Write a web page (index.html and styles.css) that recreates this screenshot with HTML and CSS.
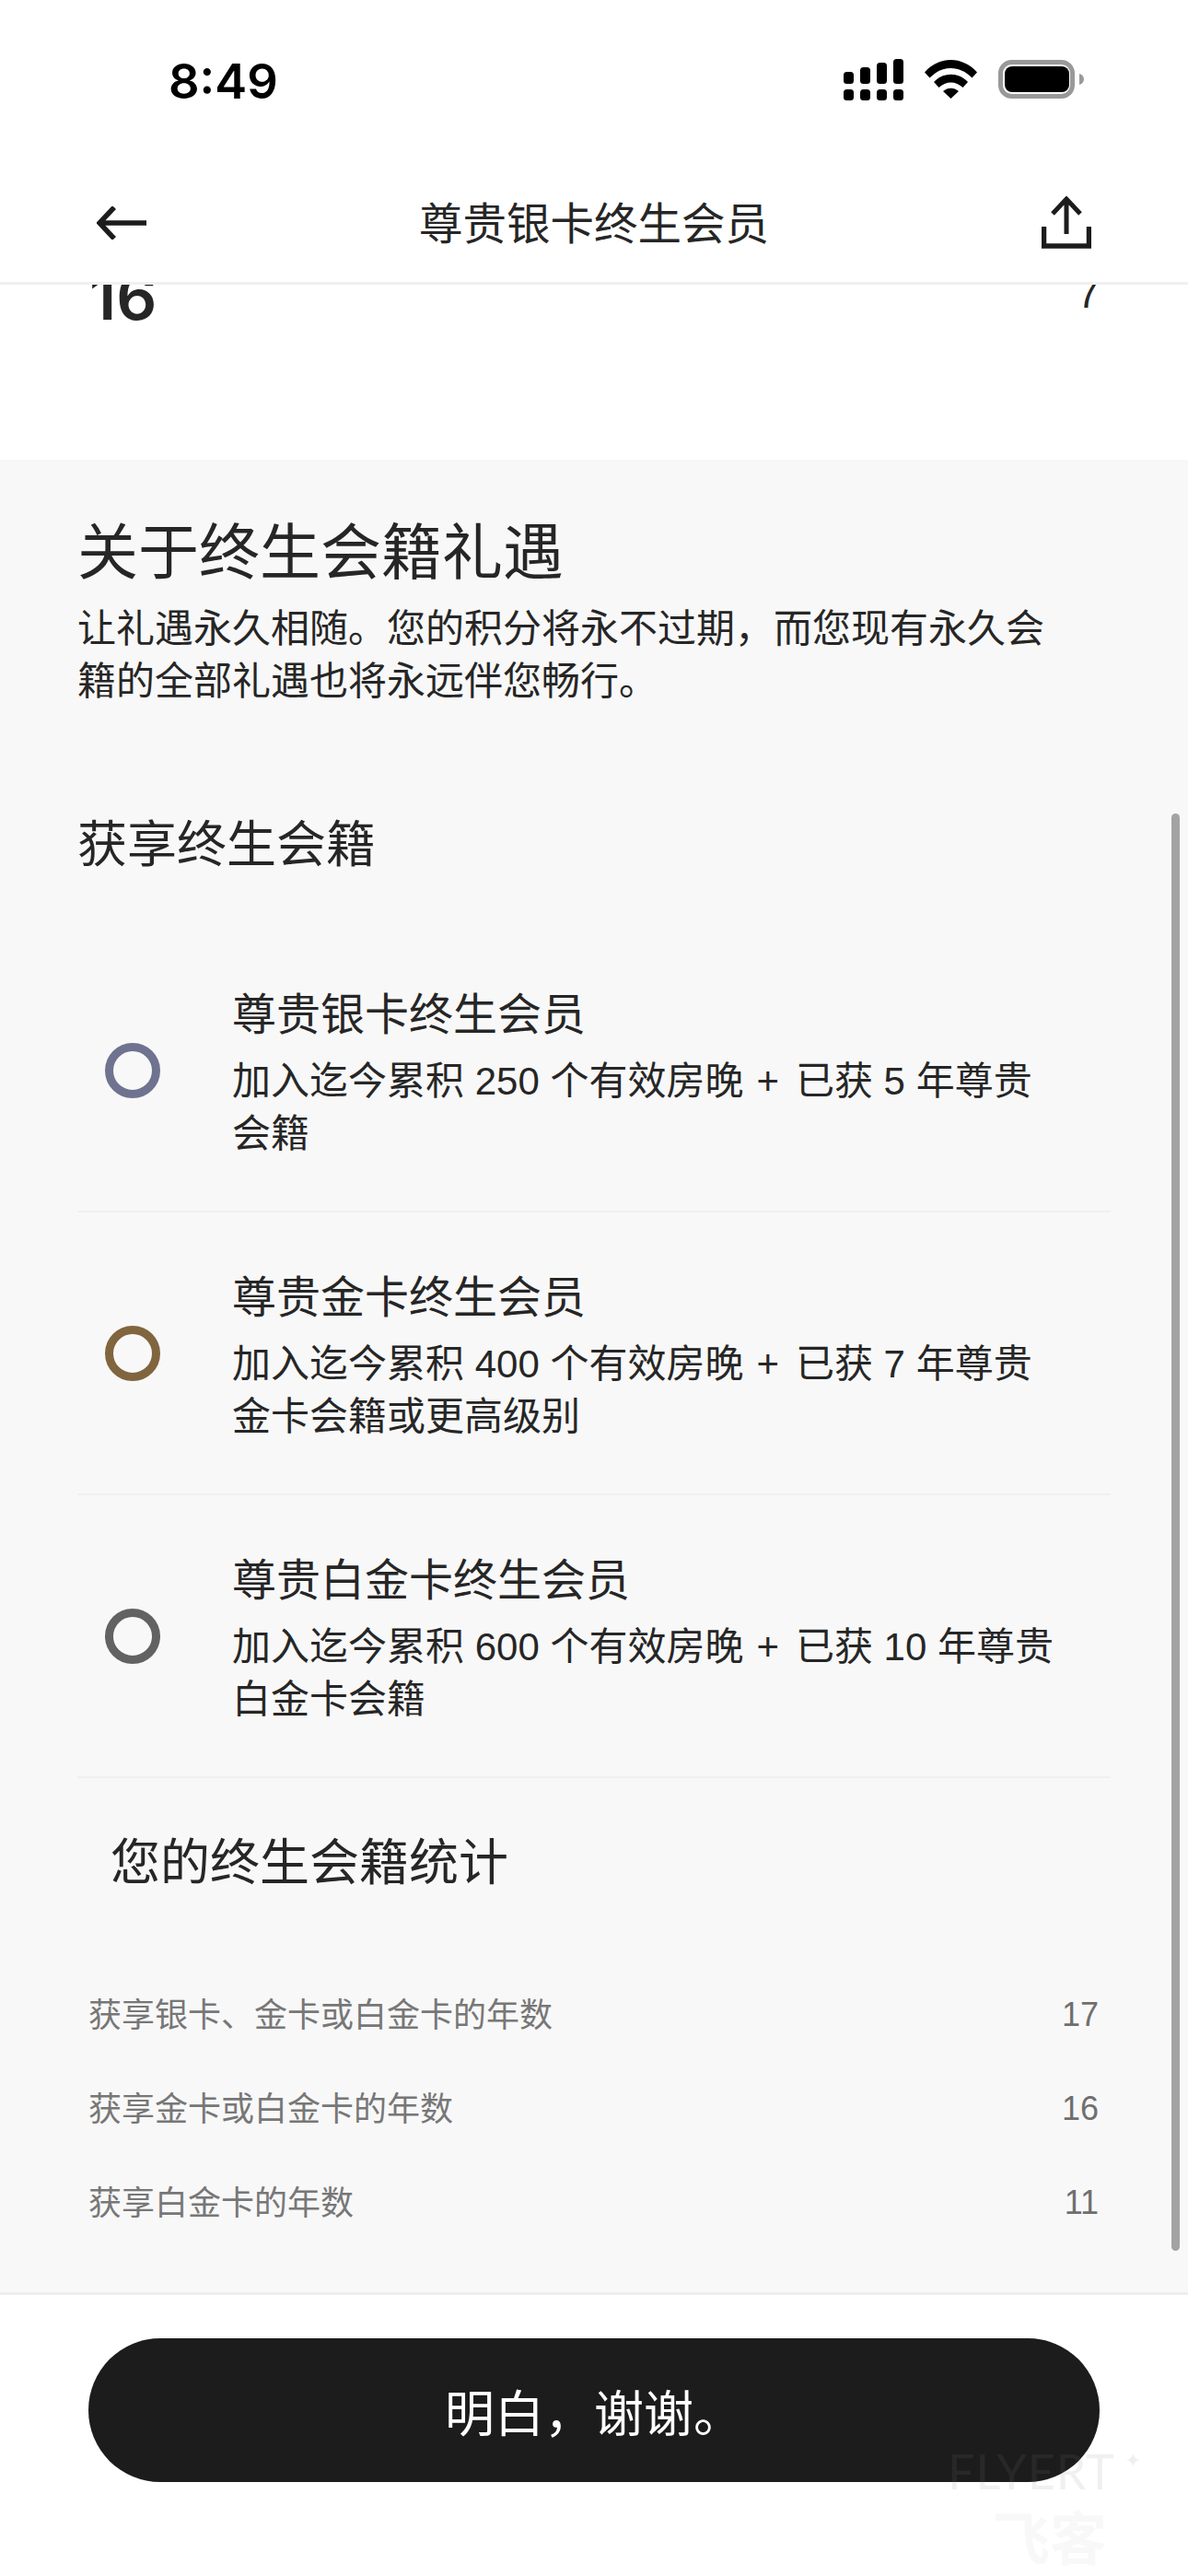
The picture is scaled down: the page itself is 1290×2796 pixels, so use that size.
FILE: index.html
```html
<!doctype html>
<html lang="zh-CN">

<head>
	<title>尊贵银卡终生会员</title>
	<meta charset="UTF-8">
	<link rel="stylesheet" href="styles.css">
</head>

<body>

<div class="screen">

	<div class="status-bar">
		<span class="status-time">8:49</span>
		<div class="status-icons">
			<svg class="icon-signal" width="65" height="45" viewBox="0 0 65 45">
				<rect x="0" y="14" width="11" height="13" rx="3.5" />
				<rect x="18" y="9" width="11" height="18" rx="3.5" />
				<rect x="36" y="4" width="11" height="23" rx="3.5" />
				<rect x="54" y="0" width="11" height="27" rx="3.5" />
				<rect x="0" y="33" width="11" height="12" rx="3.5" />
				<rect x="18" y="33" width="11" height="12" rx="3.5" />
				<rect x="36" y="33" width="11" height="12" rx="3.5" />
				<rect x="54" y="33" width="11" height="12" rx="3.5" />
			</svg>
			<svg class="icon-wifi" width="57" height="42" viewBox="0 0 57 42">
				<path d="M0 13.5 C16 -4.5 41 -4.5 57 13.5 L51.5 19.5 C38 5.5 19 5.5 5.5 19.5 Z" />
				<path d="M10 24 C20 13 37 13 47 24 L41.5 30 C34 22.5 23 22.5 15.5 30 Z" />
				<path d="M20 34 C25 29.5 32 29.5 37 34 L28.5 42 Z" />
			</svg>
			<svg class="icon-battery" width="93" height="42" viewBox="0 0 93 42">
				<rect x="2.5" y="2.5" width="78" height="37" rx="12" fill="none" stroke="#999999" stroke-width="5" />
				<rect x="7" y="7" width="70" height="28" rx="8" />
				<path d="M88 15 C91.5 16 93 18.5 93 21 C93 23.5 91.5 26 88 27 Z" fill="#999999" />
			</svg>
		</div>
	</div>

	<div class="nav-bar">
		<svg class="nav-back" width="54" height="36" viewBox="0 0 54 36">
			<path d="M54 18 H5 M19 1 L3 18 L19 35" fill="none" stroke="#1c1c1c" stroke-width="5.5" />
		</svg>
		<span class="nav-title">尊贵银卡终生会员</span>
		<svg class="nav-share" width="54" height="57" viewBox="0 0 54 57">
			<path d="M27 3 V41 M12 19 L27 3 L42 19" fill="none" stroke="#1c1c1c" stroke-width="5" />
			<path d="M2.5 33 V54 H51.5 V33" fill="none" stroke="#1c1c1c" stroke-width="5.5" />
		</svg>
	</div>

	<div class="scroll-area">
		<div class="scroll-thumb"></div>

		<div class="top-row">
			<span class="top-left">16</span>
			<span class="top-right">7</span>
		</div>

		<div class="about">
			<h1 class="about-title">关于终生会籍礼遇</h1>
			<p class="about-desc">
				让礼遇永久相随。您的积分将永不过期，而您现有永久会<br />
				籍的全部礼遇也将永远伴您畅行。
			</p>

			<h2 class="sec-title">获享终生会籍</h2>

			<div class="tier-list">
				<div class="tier">
					<div class="tier-ring ring-silver"></div>
					<div class="tier-body">
						<div class="tier-name">尊贵银卡终生会员</div>
						<div class="tier-desc">加入迄今累积 250 个有效房晚<span class="plus">+</span>已获 5 年尊贵<br />会籍</div>
					</div>
				</div>
				<div class="tier">
					<div class="tier-ring ring-gold"></div>
					<div class="tier-body">
						<div class="tier-name">尊贵金卡终生会员</div>
						<div class="tier-desc">加入迄今累积 400 个有效房晚<span class="plus">+</span>已获 7 年尊贵<br />金卡会籍或更高级别</div>
					</div>
				</div>
				<div class="tier">
					<div class="tier-ring ring-platinum"></div>
					<div class="tier-body">
						<div class="tier-name">尊贵白金卡终生会员</div>
						<div class="tier-desc">加入迄今累积 600 个有效房晚<span class="plus">+</span>已获 10 年尊贵<br />白金卡会籍</div>
					</div>
				</div>
			</div>

			<h2 class="stats-title">您的终生会籍统计</h2>

			<div class="stats">
				<div class="stat-row"><span>获享银卡、金卡或白金卡的年数</span><span class="stat-value">17</span></div>
				<div class="stat-row"><span>获享金卡或白金卡的年数</span><span class="stat-value">16</span></div>
				<div class="stat-row"><span>获享白金卡的年数</span><span class="stat-value">11</span></div>
			</div>
		</div>
	</div>

	<div class="footer">
		<button class="ok-button">明白，谢谢。</button>
	</div>

	<div class="watermark">
		<div class="wm-latin">FLYERT<span class="wm-star">✦</span></div>
		<div class="wm-cjk">飞客</div>
	</div>

</div>

</body>
</html>
```

FILE: styles.css
```css
* { box-sizing: border-box; }
html, body { margin: 0; padding: 0; }
body { background-color: #ffffff; color: #262626; font-family: "Liberation Sans", "Noto Sans CJK SC", sans-serif; font-weight: 400; }

.screen { position: relative; width: 1290px; height: 2796px; display: flex; flex-direction: column; overflow: hidden; }

/* status bar */
.status-bar { height: 190px; flex-shrink: 0; display: flex; justify-content: space-between; align-items: flex-start; padding: 64px 113px 0 183px; }
.status-time { font-size: 52.5px; line-height: 44px; font-weight: 600; margin-top: 2px; color: #000000; font-family: Inter, sans-serif; }
.status-icons { display: flex; align-items: flex-start; }
.icon-signal { margin-right: 23px; }
.icon-wifi { margin-top: 1px; margin-right: 23px; }
.icon-battery { margin-top: 1px; }

/* nav */
.nav-bar { height: 119px; flex-shrink: 0; display: flex; justify-content: space-between; align-items: center; padding: 0 105px 0 105px; border-bottom: 3px solid #f0f0f0; position: relative; z-index: 1; background-color: #ffffff; }
.nav-back { margin-top: -12px; }
.nav-title { font-size: 47.5px; line-height: 60px; margin-top: -8px; }
.nav-share { margin-top: -14px; }

/* scrolling content */
.scroll-area { flex: 1; position: relative; overflow: hidden; display: flex; flex-direction: column; }
.scroll-thumb { position: absolute; top: 574px; right: 9px; width: 9px; height: 1560px; border-radius: 5px; background-color: #a3a3a3; }

.top-row { height: 190px; flex-shrink: 0; display: flex; justify-content: space-between; align-items: flex-start; padding: 0 96px 0 97px; }
.top-left { font-size: 69px; line-height: 64px; font-weight: 600; font-family: Inter, sans-serif; margin-top: -19px; }
.top-right { font-size: 44px; line-height: 50px; margin-top: -15px; }

.about { flex: 1; background-color: #f8f8f8; padding: 61px 84px 0 84px; }
.about-title { margin: 0; font-size: 66px; line-height: 80px; font-weight: 400; }
.about-desc { margin: 14px 0 0 0; font-size: 42px; line-height: 57px; }
.sec-title { margin: 113.5px 0 0 0; font-size: 54px; line-height: 70px; font-weight: 400; }

.tier-list { margin-top: 57.5px; }
.tier { height: 307px; display: flex; align-items: center; border-bottom: 2px solid #f0f0f0; padding-left: 30px; }
.tier-ring { width: 60px; height: 60px; border-radius: 50%; border: 9px solid #000000; flex-shrink: 0; margin-right: 78px; }
.ring-silver { border-color: #6f7390; }
.ring-gold { border-color: #80653f; }
.ring-platinum { border-color: #626262; }
.tier-body { margin-top: 6px; }
.tier-name { font-size: 48px; line-height: 62px; }
.tier-desc { margin-top: 12px; font-size: 42px; line-height: 57px; }
.plus { margin: 0 18px 0 14px; }

.stats-title { margin: 57px 0 0 36px; font-size: 54px; line-height: 70px; font-weight: 400; }
.stats { margin: 76px 13px 0 12px; }
.stat-row { height: 102px; display: flex; justify-content: space-between; align-items: center; font-size: 36px; color: #777777; }
.stat-value { padding-top: 5px; color: #6f6f6f; }

/* footer */
.footer { height: 308px; flex-shrink: 0; border-top: 3px solid #eeeeee; padding: 47px 96px 0 96px; background-color: #ffffff; }
.ok-button { display: block; width: 100%; height: 156px; border: none; border-radius: 78px; background-color: #1c1c1c; color: #ffffff; font-family: inherit; font-weight: 400; font-size: 54px; }

/* watermark over the page corner */
.watermark { position: absolute; left: 1029px; top: 2644px; width: 240px; color: rgba(128, 128, 128, 0.12); }
.wm-latin { font-size: 52px; line-height: 52px; font-weight: 400; letter-spacing: 1px; font-family: Lato, sans-serif; }
.wm-star { font-size: 22px; vertical-align: 24px; margin-left: 10px; }
.wm-cjk { font-size: 62px; line-height: 64px; font-weight: 700; margin-top: 18px; margin-left: 49px; opacity: 0.45; }
```
